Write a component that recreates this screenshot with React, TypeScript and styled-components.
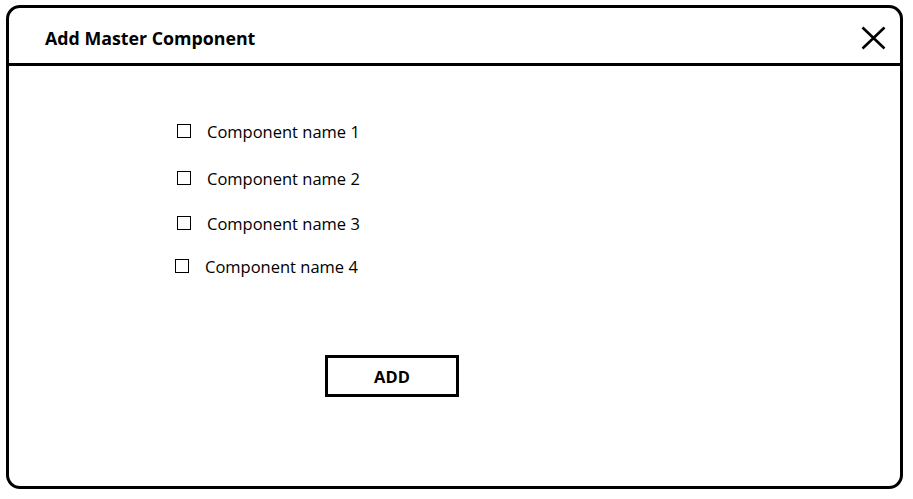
import styled, { createGlobalStyle } from "styled-components";

const GlobalStyle = createGlobalStyle`
    html, body {
        margin: 0;
        padding: 0;
        background: #ffffff;
    }
    body {
        font-family: "Open Sans", "Noto Sans", sans-serif;
        color: #000000;
    }
`;

const Dialog = styled.div`
    box-sizing: border-box;
    margin: 5px 0 0 6px;
    width: 897px;
    height: 484px;
    border: 3px solid #000;
    border-radius: 14px;
    display: flex;
    flex-direction: column;
    background: #fff;
`;

const Header = styled.header`
    box-sizing: border-box;
    height: 58px;
    border-bottom: 3px solid #000;
    display: flex;
    align-items: center;
    justify-content: space-between;
    padding: 4px 14px 0 36px;
`;

const Title = styled.h1`
    margin: 0;
    font-size: 17.8px;
    font-weight: 700;
`;

const CloseButton = styled.button`
    border: none;
    background: none;
    padding: 0;
    width: 25px;
    height: 24px;
    display: flex;
    cursor: pointer;
`;

const Body = styled.div`
    flex: 1;
    display: flex;
    flex-direction: column;
    padding-top: 53px;
`;

const List = styled.ul`
    list-style: none;
    margin: 0;
    padding: 0 0 0 168px;
    display: flex;
    flex-direction: column;
`;

const Row = styled.li<{ $shift: number; $space: number }>`
    height: 24px;
    display: flex;
    align-items: center;
    gap: 16px;
    margin-left: ${p => p.$shift}px;
    margin-top: ${p => p.$space}px;
    font-size: 16.5px;
`;

const Box = styled.input`
    appearance: none;
    box-sizing: border-box;
    margin: 0;
    width: 14px;
    height: 14px;
    border: 1.3px solid #000;
    background: #fff;
    cursor: pointer;
    &:checked {
        background: #000;
    }
`;

const Footer = styled.div`
    padding: 77px 0 0 316px;
`;

const AddButton = styled.button`
    box-sizing: border-box;
    width: 134px;
    height: 42px;
    border: 3px solid #000;
    background: #fff;
    font-family: "Open Sans", "Noto Sans", sans-serif;
    font-size: 16.5px;
    font-weight: 700;
    color: #000;
    cursor: pointer;
`;

const components = [
    { id: 1, label: "Component name 1", shift: 0, space: 0 },
    { id: 2, label: "Component name 2", shift: 0, space: 23 },
    { id: 3, label: "Component name 3", shift: 0, space: 21 },
    { id: 4, label: "Component name 4", shift: -2, space: 19 },
];

function App() {
    return (
        <>
            <GlobalStyle />
            <Dialog>
                <Header>
                    <Title>Add Master Component</Title>
                    <CloseButton aria-label="close">
                        <svg width="25" height="24" viewBox="0 0 25 24">
                            <path d="M1.5 1.5 L23.5 22.5 M23.5 1.5 L1.5 22.5" stroke="#000" strokeWidth="2.6" fill="none" />
                        </svg>
                    </CloseButton>
                </Header>
                <Body>
                    <List>
                        {components.map(c => (
                            <Row key={c.id} $shift={c.shift} $space={c.space}>
                                <Box type="checkbox" />
                                <span>{c.label}</span>
                            </Row>
                        ))}
                    </List>
                    <Footer>
                        <AddButton>ADD</AddButton>
                    </Footer>
                </Body>
            </Dialog>
        </>
    );
}

export default App;
